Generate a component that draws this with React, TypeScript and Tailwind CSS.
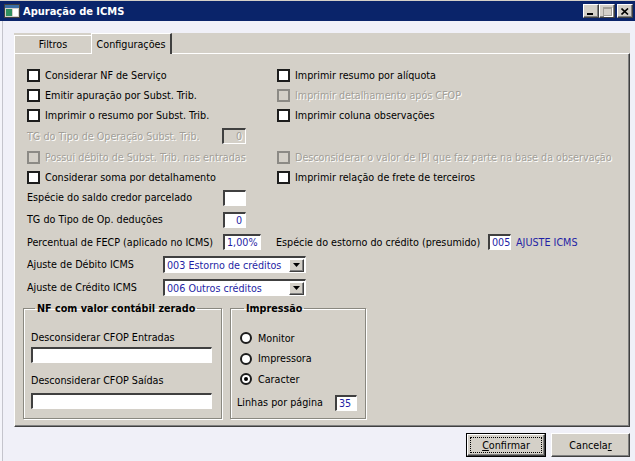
import React from 'react';

const sunken =
  'border-t-2 border-l-2 border-b border-r border-t-[#404040] border-l-[#404040] border-b-white border-r-white';
const raised =
  'border border-t-white border-l-white border-b-[#404040] border-r-[#404040] shadow-[inset_-1px_-1px_0_#808080]';

function Check({ label, disabled }: { label: string; disabled?: boolean }) {
  return (
    <div className="flex h-full items-center gap-[5px]">
      <span
        className={
          disabled
            ? 'h-[13px] w-[13px] shrink-0 border-2 border-[#8c8a85] bg-[#d4d0c8]'
            : 'h-[13px] w-[13px] shrink-0 border-2 border-[#1c1c1c] bg-white'
        }
      />
      <span className={disabled ? 'whitespace-nowrap text-[#a29f98] [text-shadow:1px_1px_0_#fff]' : 'whitespace-nowrap'}>
        {label}
      </span>
    </div>
  );
}

function Box({ value, w, disabled, left }: { value: string; w: string; disabled?: boolean; left?: boolean }) {
  return (
    <div
      className={`${sunken} ${w} flex h-[16px] items-center ${left ? 'justify-start pl-[2px]' : 'justify-end pr-[3px]'} ${
        disabled ? 'bg-[#d4d0c8] text-[#a29f98] [text-shadow:1px_1px_0_#fff]' : 'bg-white text-[#1f1fa5]'
      }`}
    >
      {value}
    </div>
  );
}

function Select({ value }: { value: string }) {
  return (
    <div className={`${sunken} flex h-[17px] w-[143px] items-center bg-white`}>
      <span className="flex-1 whitespace-nowrap pl-[2px] text-[#1f1fa5]">{value}</span>
      <span className={`${raised} mr-[1px] flex h-[13px] w-[15px] items-center justify-center bg-[#d4d0c8]`}>
        <svg width="7" height="4" viewBox="0 0 7 4">
          <path d="M0 0h7L3.5 4z" fill="#000" />
        </svg>
      </span>
    </div>
  );
}

function Radio({ label, checked }: { label: string; checked?: boolean }) {
  return (
    <div className="flex h-[20.5px] items-center gap-[6px]">
      <span className="flex h-[12px] w-[12px] items-center justify-center rounded-full border-2 border-[#1c1c1c] bg-white">
        {checked && <span className="h-[4px] w-[4px] rounded-full bg-black" />}
      </span>
      <span>{label}</span>
    </div>
  );
}

export default function App() {
  return (
    <div className="flex h-[461px] w-[635px] flex-col overflow-hidden bg-[#f0f0f8] font-['DejaVu_Sans_Condensed','Liberation_Sans',sans-serif] text-[10.7px] leading-[13px] text-black">
      {/* title bar */}
      <div className="flex h-[21px] shrink-0 items-center border-t border-t-[#d4d0c8] bg-[#0a246a] pl-[4px] pr-[2px]">
        <svg width="16" height="14" viewBox="0 0 16 14" className="shrink-0">
          <rect x="0.5" y="0.5" width="15" height="13" fill="#d4d0c8" stroke="#404040" />
          <rect x="1" y="1" width="14" height="3" fill="#3a6ea5" />
          <rect x="2" y="5" width="6" height="7" fill="#2f8f5f" />
          <rect x="9" y="5" width="5" height="7" fill="#ffffff" />
        </svg>
        <span className="ml-[3px] flex-1 text-[11px] font-bold text-white">Apuração de ICMS</span>
        <div className="flex items-center">
          <span className={`${raised} flex h-[14px] w-[16px] items-end bg-[#d4d0c8] pb-[2px] pl-[3px]`}>
            <span className="h-[2px] w-[6px] bg-black" />
          </span>
          <span className={`${raised} flex h-[14px] w-[16px] items-center justify-center bg-[#d4d0c8]`}>
            <span className="h-[9px] w-[9px] border border-t-2 border-[#a29f98] shadow-[1px_1px_0_#fff]" />
          </span>
          <span className={`${raised} ml-[2px] flex h-[14px] w-[16px] items-center justify-center bg-[#d4d0c8]`}>
            <svg width="8" height="7" viewBox="0 0 8 7">
              <path d="M0.5 0.5L7 6.5M7 0.5L0.5 6.5" stroke="#000" strokeWidth="1.6" />
            </svg>
          </span>
        </div>
      </div>

      {/* body */}
      <div className="flex flex-1 flex-col pl-[14px] pr-[5px] pt-[12px] shadow-[inset_2px_0_0_#f4f4fa,inset_3px_0_0_#c4c4cc]">
        {/* tabs */}
        <div className="flex h-[20px] items-end bg-[#d4d0c8]">
          <div className="flex h-[18px] w-[77px] items-center justify-center border-l border-t border-l-white border-t-white bg-[#d4d0c8]">
            Filtros
          </div>
          <div className="relative z-10 -mb-[1px] flex h-[21px] w-[81px] items-center justify-center border-l border-t border-r-2 border-l-white border-t-white border-r-[#404040] bg-[#d4d0c8]">
            Configurações
          </div>
        </div>

        {/* panel */}
        <div className={`${raised} flex h-[374px] flex-col bg-[#d4d0c8] pl-[8px] pt-[11px]`}>
          <div className="flex flex-col pl-[4px]">
            <div className="flex h-[20px]">
              <div className="w-[250px]"><Check label="Considerar NF de Serviço" /></div>
              <Check label="Imprimir resumo por alíquota" />
            </div>
            <div className="flex h-[20px]">
              <div className="w-[250px]"><Check label="Emitir apuração por Subst. Trib." /></div>
              <Check label="Imprimir detalhamento após CFOP" disabled />
            </div>
            <div className="flex h-[20px]">
              <div className="w-[250px]"><Check label="Imprimir o resumo por Subst. Trib." /></div>
              <Check label="Imprimir coluna observações" />
            </div>
            <div className="flex h-[22px] items-center">
              <span className="w-[195px] text-[#a29f98] [text-shadow:1px_1px_0_#fff]">TG do Tipo de Operação Subst. Trib.</span>
              <Box value="0" w="w-[24px]" disabled />
            </div>
            <div className="flex h-[20px]">
              <div className="w-[250px]"><Check label="Possui débito de Subst. Trib. nas entradas" disabled /></div>
              <Check label="Desconsiderar o valor de IPI que faz parte na base da observação" disabled />
            </div>
            <div className="flex h-[20px]">
              <div className="w-[250px]"><Check label="Considerar soma por detalhamento" /></div>
              <Check label="Imprimir relação de frete de terceiros" />
            </div>
            <div className="flex h-[21px] items-center">
              <span className="w-[196px]">Espécie do saldo credor parcelado</span>
              <Box value="" w="w-[23px]" />
            </div>
            <div className="flex h-[23px] items-center">
              <span className="w-[196px]">TG do Tipo de Op. deduções</span>
              <Box value="0" w="w-[23px]" />
            </div>
            <div className="flex h-[22px] items-center">
              <span className="w-[196px]">Percentual de FECP (aplicado no ICMS)</span>
              <Box value="1,00%" w="w-[38px]" left />
              <span className="ml-[15px] w-[212px] whitespace-nowrap">Espécie do estorno do crédito (presumido)</span>
              <Box value="005" w="w-[23px]" left />
              <span className="ml-[5px] text-[#1f1fa5]">AJUSTE ICMS</span>
            </div>
            <div className="flex h-[23px] items-center">
              <span className="w-[136px]">Ajuste de Débito ICMS</span>
              <Select value="003 Estorno de créditos" />
            </div>
            <div className="flex h-[23px] items-center">
              <span className="w-[136px]">Ajuste de Crédito ICMS</span>
              <Select value="006 Outros créditos" />
            </div>
          </div>

          {/* group boxes */}
          <div className="mt-[3px] flex gap-[8px]">
            <fieldset className="h-[117px] w-[199px] border border-[#8a8880] pl-[7px] shadow-[inset_1px_1px_0_#fff,1px_1px_0_#fff]">
              <legend className="ml-[4px] px-[2px] font-bold">NF com valor contábil zerado</legend>
              <div className="mt-[16px]">Desconsiderar CFOP Entradas</div>
              <div className="mt-[3px]"><Box value="" w="w-[181px]" /></div>
              <div className="mt-[11px]">Desconsiderar CFOP Saídas</div>
              <div className="mt-[6px]"><Box value="" w="w-[181px]" /></div>
            </fieldset>
            <fieldset className="h-[117px] w-[136px] border border-[#8a8880] pl-[9px] shadow-[inset_1px_1px_0_#fff,1px_1px_0_#fff]">
              <legend className="ml-[4px] px-[2px] font-bold">Impressão</legend>
              <div className="mt-[13px]">
                <Radio label="Monitor" />
                <Radio label="Impressora" />
                <Radio label="Caracter" checked />
              </div>
              <div className="-ml-[3px] mt-[5px] flex items-center">
                <span className="w-[98px]">Linhas por página</span>
                <Box value="35" w="w-[22px]" left />
              </div>
            </fieldset>
          </div>
        </div>

        {/* buttons */}
        <div className="mt-[6px] flex justify-end gap-[5px]">
          <button className="h-[24px] w-[80px] border border-black bg-[#d4d0c8] p-0">
            <div className={`${raised} flex h-full w-full items-center justify-center p-[2px]`}>
              <div className="flex h-full w-full items-center justify-center border border-dotted border-black">
                <span className="underline">C</span>onfirmar
              </div>
            </div>
          </button>
          <button className={`${raised} flex h-[24px] w-[79px] items-center justify-center bg-[#d4d0c8]`}>
            Cancela<span className="underline">r</span>
          </button>
        </div>
      </div>
    </div>
  );
}
